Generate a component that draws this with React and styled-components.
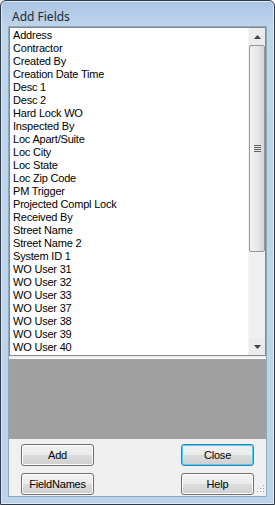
import React from 'react';
import styled, { createGlobalStyle } from 'styled-components';

const fields = [
  'Address', 'Contractor', 'Created By', 'Creation Date Time', 'Desc 1', 'Desc 2',
  'Hard Lock WO', 'Inspected By', 'Loc Apart/Suite', 'Loc City', 'Loc State',
  'Loc Zip Code', 'PM Trigger', 'Projected Compl Lock', 'Received By', 'Street Name',
  'Street Name 2', 'System ID 1', 'WO User 31', 'WO User 32', 'WO User 33',
  'WO User 37', 'WO User 38', 'WO User 39', 'WO User 40',
];

const App = () => {
  return (
    <>
      <GlobalStyle />
      <Frame>
        <TitleBar>Add Fields</TitleBar>
        <Client>
          <ListBox>
            <Items>
              {fields.map(f => (
                <Item key={f}>{f}</Item>
              ))}
            </Items>
            <ScrollBar>
              <ArrowButton>
                <svg width="7" height="4" viewBox="0 0 7 4">
                  <path d="M3.5 0 L7 4 L0 4 Z" fill="#404040" />
                </svg>
              </ArrowButton>
              <Thumb>
                <Grip />
              </Thumb>
              <Track />
              <ArrowButton>
                <svg width="7" height="4" viewBox="0 0 7 4">
                  <path d="M0 0 L7 0 L3.5 4 Z" fill="#404040" />
                </svg>
              </ArrowButton>
            </ScrollBar>
          </ListBox>
          <Preview />
          <ButtonGrid>
            <Button>Add</Button>
            <Button $focused>Close</Button>
            <Button>FieldNames</Button>
            <Button>Help</Button>
          </ButtonGrid>
          <SizeGrip>
            <svg width="10" height="10" viewBox="0 0 10 10">
              {[[8, 0], [8, 3], [5, 3], [8, 6], [5, 6], [2, 6]].map(([x, y]) => (
                <rect key={`${x}-${y}`} x={x} y={y} width="1" height="1" fill="#a0a0a0" />
              ))}
            </svg>
          </SizeGrip>
        </Client>
      </Frame>
    </>
  );
};

const GlobalStyle = createGlobalStyle`
  html, body {
    margin: 0;
    padding: 0;
    background: #ffffff;
  }
`;

const Frame = styled.div`
  width: 275px;
  height: 505px;
  box-sizing: border-box;
  border: 1px solid #2e3a47;
  border-radius: 6px 6px 0 0;
  background: linear-gradient(to bottom, #a9c4e2 0px, #bfd5ec 26px, #bcd3ea 100%);
  padding: 0 7px 7px 7px;
  display: flex;
  flex-direction: column;
  box-shadow: inset 0 0 0 1px #dfeaf6;
`;

const TitleBar = styled.div`
  height: 25px;
  display: flex;
  align-items: center;
  padding-left: 4px;
  font-family: "Noto Sans", "DejaVu Sans", sans-serif;
  font-size: 12px;
  color: #1e2a36;
  padding-top: 6px;
  box-sizing: border-box;
`;

const Client = styled.div`
  flex: 1;
  background: #f0f0f0;
  display: flex;
  flex-direction: column;
  position: relative;
  border: 1px solid #8fa8c2;
`;

const ListBox = styled.div`
  height: 329px;
  box-sizing: border-box;
  border: 1px solid #828790;
  background: #ffffff;
  display: flex;
  overflow: hidden;
`;

const Items = styled.div`
  flex: 1;
  padding: 1px 0 0 3px;
`;

const Item = styled.div`
  height: 13px;
  line-height: 13px;
  font-family: "Liberation Sans", Arial, sans-serif;
  font-size: 11px;
  letter-spacing: -0.2px;
  color: #000000;
  white-space: nowrap;
`;

const ScrollBar = styled.div`
  width: 16px;
  display: flex;
  flex-direction: column;
  background: #f0f0f0;
  border-left: 1px solid #f4f4f4;
`;

const ArrowButton = styled.div`
  height: 17px;
  display: flex;
  align-items: center;
  justify-content: center;
  background: #ececec;
`;

const Thumb = styled.div`
  height: 207px;
  box-sizing: border-box;
  border: 1px solid #979797;
  border-radius: 2px;
  background: linear-gradient(to right, #f3f3f3 0%, #e8e8e8 50%, #d6d6d6 100%);
  display: flex;
  align-items: center;
  justify-content: center;
`;

const Grip = styled.div`
  width: 7px;
  height: 7px;
  background: repeating-linear-gradient(to bottom, #5f5f5f 0px, #5f5f5f 1px, #e6e6e6 1px, #e6e6e6 2px);
`;

const Track = styled.div`
  flex: 1;
  background: #f0f0f0;
`;

const Preview = styled.div`
  margin-top: 2px;
  height: 80px;
  background: #a0a0a0;
  border-top: 1px solid #ffffff;
`;

const ButtonGrid = styled.div`
  display: grid;
  grid-template-columns: 73px 73px;
  justify-content: space-between;
  row-gap: 7px;
  padding: 5px 12px 0 12px;
`;

const Button = styled.button`
  height: 22px;
  box-sizing: border-box;
  border: 1px solid ${p => (p.$focused ? '#3c7fb1' : '#707070')};
  border-radius: 3px;
  background: linear-gradient(to bottom, #f2f2f2 0%, #ebebeb 50%, #dddddd 51%, #cfcfcf 100%);
  box-shadow: inset 0 0 0 1px ${p => (p.$focused ? '#48d2f5' : '#fcfcfc')};
  font-family: "Liberation Sans", Arial, sans-serif;
  font-size: 11px;
  letter-spacing: -0.2px;
  color: #000000;
  padding: 0;
`;

const SizeGrip = styled.div`
  position: absolute;
  right: 1px;
  bottom: 1px;
  line-height: 0;
`;

export default App;
